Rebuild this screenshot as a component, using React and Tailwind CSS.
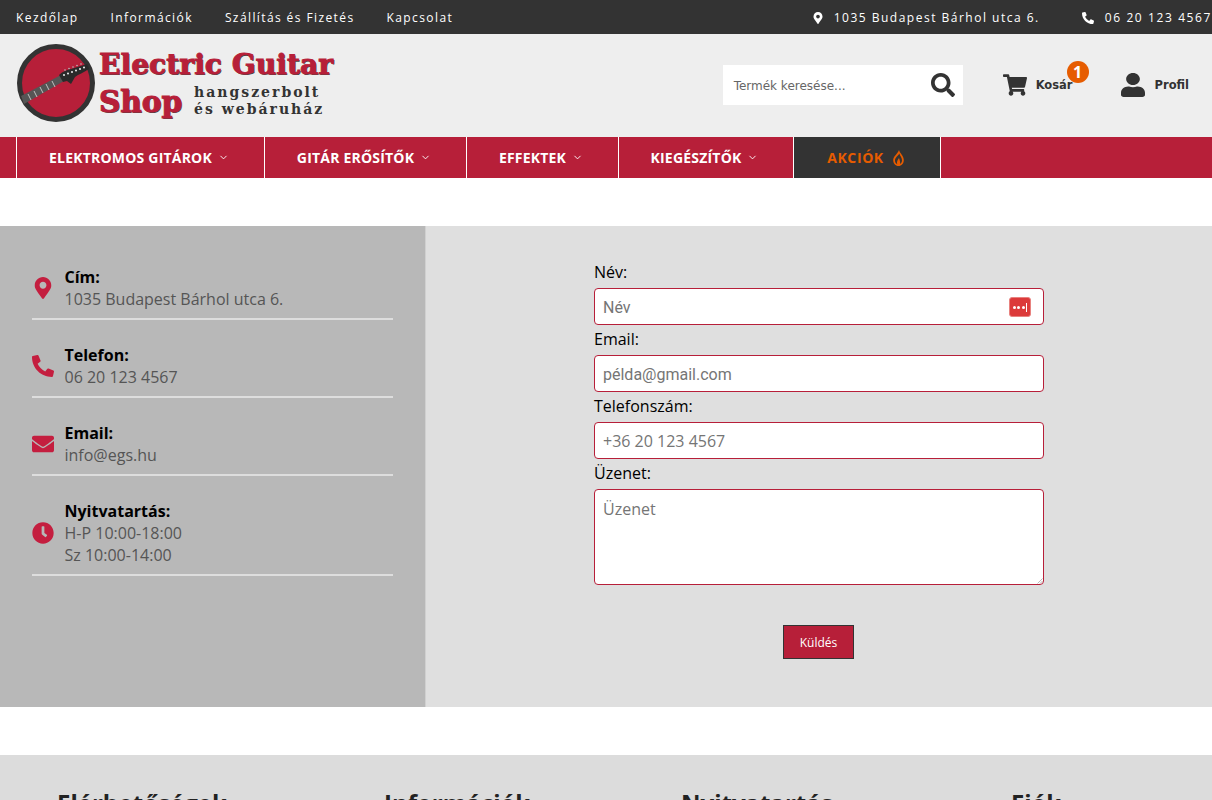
import React from "react";
import { FaMapMarkerAlt, FaPhoneAlt, FaEnvelope, FaClock, FaShoppingCart, FaUser, FaSearch } from "react-icons/fa";
import { FiChevronDown } from "react-icons/fi";

const OPEN = "font-['Open_Sans','Noto_Sans',sans-serif]";

function Logo() {
  return (
    <div className="flex items-start mb-[5px]">
      <svg width="78" height="78" viewBox="0 0 78 78" className="shrink-0">
        <circle cx="39" cy="39" r="36.5" fill="#b71f39" stroke="#333" strokeWidth="5" />
        <path d="M4 52 L44 31 L47 37 L7 60 Z" fill="#555" />
        <path d="M11 50l3 6M17 47l3 6M23 43l3 6M29 40l3 6M35 37l3 6" stroke="#ddd" strokeWidth="0.8" />
        <path d="M42 31 C46 27 50 26 54 25 L70 20 L72 25 C66 29 62 30 58 33 L54 40 L50 37 L46 38 Z" fill="#2a2a2a" />
        <g fill="#eee">
          <circle cx="47" cy="31" r="1" /><circle cx="51" cy="29.500" r="1" /><circle cx="55" cy="28" r="1" />
          <circle cx="59" cy="26.500" r="1" /><circle cx="63" cy="25" r="1" /><circle cx="67" cy="23.500" r="1" />
        </g>
        <g fill="#bbb">
          <circle cx="48" cy="26" r="0.8" /><circle cx="52" cy="24.500" r="0.8" /><circle cx="56" cy="23" r="0.8" />
          <circle cx="60" cy="21.500" r="0.8" /><circle cx="64" cy="20" r="0.8" />
        </g>
      </svg>
      <div className="ml-[4px] mt-[6px] font-['DejaVu_Serif',serif] font-bold">
        <div className="text-[28px] leading-[30px] tracking-[0.1px] text-[#b71f39] [-webkit-text-stroke:0.9px_#b71f39] [text-shadow:1px_1px_0_#444] whitespace-nowrap">Electric Guitar</div>
        <div className="flex items-center mt-[3px]">
          <div className="text-[29.500px] leading-[38px] text-[#b71f39] [-webkit-text-stroke:1px_#b71f39] [text-shadow:1px_1px_0_#444]">Shop</div>
          <div className="ml-[12px] mt-[-3px] text-[#333] text-[14px] leading-[17px] tracking-[2px] whitespace-nowrap">
            <div>hangszerbolt</div>
            <div>és webáruház</div>
          </div>
        </div>
      </div>
    </div>
  );
}

function TopBar() {
  return (
    <div className={`h-[34px] pt-[1px] bg-[#333] text-white text-[12px] tracking-[1.4px] flex items-center justify-between pl-4 whitespace-nowrap overflow-hidden ${OPEN}`}>
      <div className="flex gap-[32px]">
        <span>Kezdőlap</span>
        <span>Információk</span>
        <span>Szállítás és Fizetés</span>
        <span>Kapcsolat</span>
      </div>
      <div className="flex items-center tracking-[1.5px]">
        <FaMapMarkerAlt className="text-[12px]" />
        <span className="ml-[10px]">1035 Budapest Bárhol utca 6.</span>
        <FaPhoneAlt className="ml-[42px] text-[12px]" />
        <span className="ml-[11px] tracking-[1.6px]">06 20 123 4567</span>
      </div>
    </div>
  );
}

function Header() {
  return (
    <div className="h-[103px] bg-[#eee] flex items-center pl-[17px]">
      <Logo />
      <div className="ml-auto flex items-center mb-[1px]">
        <div className="w-[240px] h-[40px] bg-white flex items-center pl-[11px] pr-[8px]">
          <span className="pt-[1px] font-['DejaVu_Sans',sans-serif] text-[12px] text-[#666]">Termék keresése...</span>
          <FaSearch className="ml-auto text-[24px] text-[#333]" />
        </div>
        <div className="relative ml-[40px] flex items-center font-['DejaVu_Sans',sans-serif] font-bold text-[11.500px] text-[#333]">
          <FaShoppingCart className="text-[24px] mr-[9px]" />
          <span className="pt-[1px]">Kosár</span>
          <span className={`absolute left-[64px] top-[-12px] w-[22px] h-[22px] rounded-full bg-[#e65c00] text-white text-[16px] font-bold flex items-center justify-center ${OPEN}`}>1</span>
        </div>
        <div className="ml-[48px] mr-[23px] flex items-center font-['DejaVu_Sans',sans-serif] font-bold text-[11.500px] text-[#333]">
          <FaUser className="w-[24px] h-[24px] mr-[10px]" preserveAspectRatio="none" />
          <span className="pt-[1px]">Profil</span>
        </div>
      </div>
    </div>
  );
}

function NavItem({ label, w }) {
  return (
    <div className={`h-full pr-[3px] border-l border-white flex items-center justify-center text-white font-bold text-[14px] tracking-[0.2px] ${w}`}>
      {label}
      <FiChevronDown className="ml-[6px] text-[11px]" />
    </div>
  );
}

function Nav() {
  return (
    <div className={`h-[41px] bg-[#b71f39] flex pl-4 whitespace-nowrap ${OPEN}`}>
      <NavItem label="ELEKTROMOS GITÁROK" w="w-[248px]" />
      <NavItem label="GITÁR ERŐSÍTŐK" w="w-[202px]" />
      <NavItem label="EFFEKTEK" w="w-[152px]" />
      <NavItem label="KIEGÉSZÍTŐK" w="w-[175px]" />
      <div className="h-full w-[148px] pr-[3px] border-x border-white bg-[#333] flex items-center justify-center text-[#e65c00] font-bold text-[14px] tracking-[0.6px]">
        AKCIÓK
        <svg width="11" height="16" viewBox="0 0 11 16" className="ml-[9px]" fill="#e65c00" fillRule="evenodd">
          <path d="M6 0 C6.500 3 10.800 5.800 10.800 10 C10.800 13.500 8.500 16 5.500 16 C2.500 16 0.200 13.500 0.200 10 C0.200 6.500 4.500 4 6 0 Z M6.300 3.500 C5 6 2 7.500 2 10.500 C2 12.300 2.800 13.500 4.200 14.200 C3.500 12 4.500 10 6 8 C6.500 10 7.500 11 7 14 C8.300 13.300 9 12 9 10.300 C9 7.500 7 6 6.300 3.500 Z" />
        </svg>
      </div>
    </div>
  );
}

function InfoRow({ icon, title, lines }) {
  return (
    <div className="border-b-2 border-[#ddd] pb-[8px] mb-[24px] flex items-center">
      <div className="w-[32.500px] shrink-0 flex justify-start text-[#c41e3f]">{icon}</div>
      <div className="text-[16px] leading-[22px]">
        <div className="font-bold text-black">{title}</div>
        {lines.map((l) => (
          <div key={l} className="text-[#555]">{l}</div>
        ))}
      </div>
    </div>
  );
}

const inputBase = "block w-full h-[37px] mb-[3px] px-[8px] pt-[1px] bg-white border border-[#b71f39] rounded-[4px] text-[16px] placeholder:text-[#757575] outline-none";

function Label({ children }) {
  return <label className={`block h-[22px] leading-[22px] mb-[5px] text-[16px] text-black ${OPEN}`}>{children}</label>;
}

function Main() {
  return (
    <div className={`mt-[48px] h-[481px] flex ${OPEN}`}>
      <div className="w-[426px] shrink-0 bg-[#b8b8b8] border-r border-[#d0d0d0] pt-[40px] pl-[32px] pr-[32px]">
        <InfoRow icon={<FaMapMarkerAlt className="text-[22px]" />} title="Cím:" lines={["1035 Budapest Bárhol utca 6."]} />
        <InfoRow icon={<FaPhoneAlt className="text-[22px]" />} title="Telefon:" lines={["06 20 123 4567"]} />
        <InfoRow icon={<FaEnvelope className="text-[22px]" />} title="Email:" lines={["info@egs.hu"]} />
        <InfoRow icon={<FaClock className="text-[22px]" />} title="Nyitvatartás:" lines={["H-P 10:00-18:00", "Sz 10:00-14:00"]} />
      </div>
      <div className="flex-1 bg-[#dfdfdf] pt-[35px] pl-[168px]">
        <div className="w-[450px]">
          <Label>Név:</Label>
          <div className="relative">
            <input placeholder="Név" className={`${inputBase} font-['Roboto',sans-serif]`} />
            <div className="absolute right-[13px] top-[9px] w-[22px] h-[20px] rounded-[3px] bg-[#dc3a3a] border border-[#e8827f] flex items-center justify-center gap-[1.500px]">
              <span className="w-[3px] h-[3px] rounded-full bg-white" />
              <span className="w-[3px] h-[3px] rounded-full bg-white" />
              <span className="w-[3px] h-[3px] rounded-full bg-white" />
              <span className="w-[1px] h-[9px] bg-white" />
            </div>
          </div>
          <Label>Email:</Label>
          <input placeholder="példa@gmail.com" className={`${inputBase} font-['Roboto',sans-serif]`} />
          <Label>Telefonszám:</Label>
          <input placeholder="+36 20 123 4567" className={`${inputBase} ${OPEN}`} />
          <Label>Üzenet:</Label>
          <div className="relative">
            <textarea
              placeholder="Üzenet"
              className={`block w-full h-[96px] px-[8px] py-[7px] bg-white border border-[#b71f39] rounded-[4px] text-[16px] leading-[24px] placeholder:text-[#757575] outline-none resize-none ${OPEN}`}
            />
            <svg width="6" height="6" viewBox="0 0 6 6" className="absolute right-[1px] bottom-[1px]" stroke="#aaa" strokeWidth="0.8">
              <path d="M0.500 5.500 L5.500 0.500 M3 5.500 L5.500 3" />
            </svg>
          </div>
          <div className="flex justify-center mt-[40px] pr-[1px]">
            <button className={`w-[71px] h-[34px] pt-[1px] bg-[#b71f39] border border-[#333] text-white text-[12px] ${OPEN}`}>Küldés</button>
          </div>
        </div>
      </div>
    </div>
  );
}

function Footer() {
  return (
    <div className={`mt-[48px] h-[200px] bg-[#dcdcdc] pt-[32px] text-[24px] leading-[32px] font-bold text-[#222] ${OPEN}`}>
      <div className="flex whitespace-nowrap">
        <div className="w-[384px] pl-[57px]">Elérhetőségek</div>
        <div className="w-[297px]">Információk</div>
        <div className="w-[330px]">Nyitvatartás</div>
        <div>Fiók</div>
      </div>
    </div>
  );
}

export default function App() {
  return (
    <div className="w-full h-[800px] overflow-hidden bg-white">
      <TopBar />
      <Header />
      <Nav />
      <Main />
      <Footer />
    </div>
  );
}
